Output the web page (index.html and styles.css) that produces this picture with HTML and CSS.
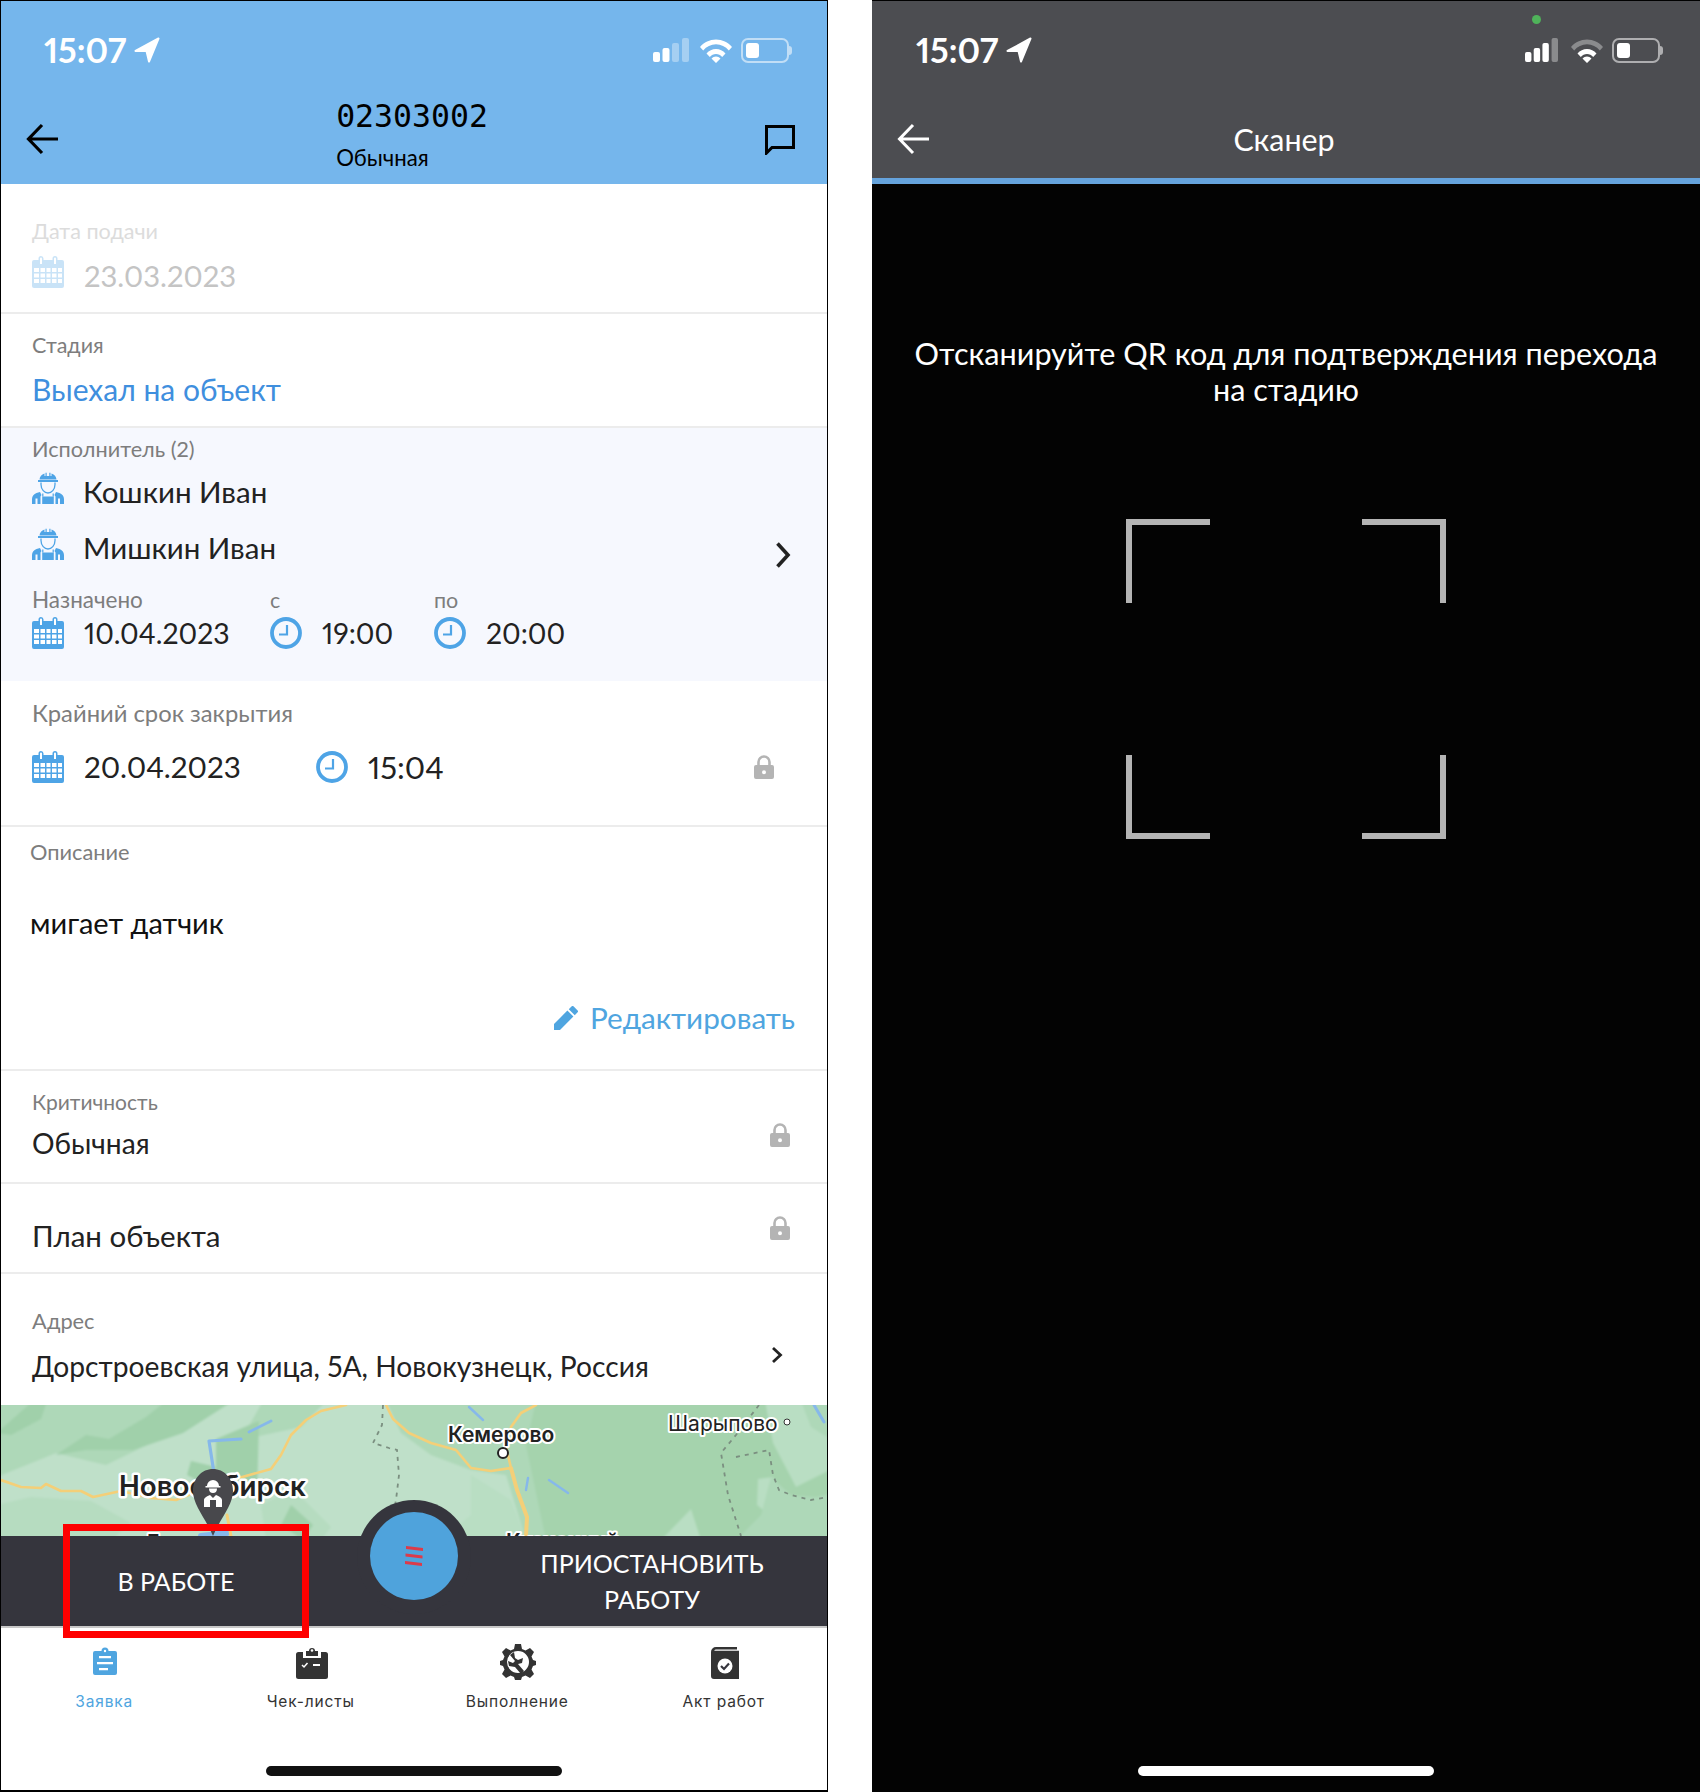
FILE: index.html
```html
<!DOCTYPE html>
<html lang="ru">
<head>
<meta charset="utf-8">
<title>Заявка и сканер</title>
<link rel="stylesheet" href="styles.css">
</head>
<body>
<svg class="defs" width="0" height="0" aria-hidden="true">
  <defs>
    <symbol id="cal" viewBox="0 0 32 32">
      <path fill="currentColor" d="M2 4h4.500V2.500a2.500 2.500 0 0 1 5 0V4h9V2.500a2.500 2.500 0 0 1 5 0V4H30a2 2 0 0 1 2 2v24a2 2 0 0 1-2 2H2a2 2 0 0 1-2-2V6a2 2 0 0 1 2-2z"/>
      <path fill="#fff" d="M8 2.500a1 1 0 0 1 2 0V8H8zM22 2.500a1 1 0 0 1 2 0V8h-2z"/>
      <path fill="#fff" d="M2 12h5v4H2zM8.500 12h4.500v4H8.500zM14.500 12h4v4h-4zM20 12h4.500v4H20zM26 12h4v4h-4zM2 17.500h5v4H2zM8.500 17.500h4.500v4H8.500zM14.500 17.500h4v4h-4zM20 17.500h4.500v4H20zM26 17.500h4v4h-4zM2 23h5v4H2zM8.500 23h4.500v4H8.500zM14.500 23h4v4h-4zM20 23h4.500v4H20zM26 23h4v4h-4z"/>
    </symbol>
    <symbol id="clock" viewBox="0 0 32 32">
      <circle cx="16" cy="16" r="14" fill="none" stroke="currentColor" stroke-width="3.800"/>
      <path fill="none" stroke="currentColor" stroke-width="2.200" d="M17 8v9.500H9"/>
    </symbol>
    <symbol id="worker" viewBox="0 0 32 32">
      <path fill="currentColor" d="M6 8h20v2H6zM7.500 7.500C7.800 4.500 9.500 2.500 12.500 1.500V4h1V.8h1.200V4h2.600V.8h1.200V4h1V1.500c3 1 4.700 3 5 6z"/>
      <path fill="none" stroke="currentColor" stroke-width="1.300" d="M9 10.500v2c0 5 3.500 8.500 7 8.500s7-3.500 7-8.500v-2"/>
      <path fill="currentColor" d="M0 32v-5c0-3 2-5 4.500-6L8 20l1.500 3-1 1.500V32H5.500v-5.500h-2V32zM32 32v-5c0-3-2-5-4.500-6L24 20l-1.500 3 1 1.500V32h2.500v-5.500h2V32z"/>
      <path fill="currentColor" d="M10.200 24.500h11.600V32H10.200z"/>
      <path fill="none" stroke="currentColor" stroke-width="1.200" d="M10.800 21.500v3M21.200 21.500v3"/>
    </symbol>
    <symbol id="lock" viewBox="0 0 20 24">
      <path fill="none" stroke="currentColor" stroke-width="2.600" d="M4.500 11V7a5.500 5.500 0 0 1 11 0v4"/>
      <path fill="currentColor" fill-rule="evenodd" d="M2 10h16a2 2 0 0 1 2 2v10a2 2 0 0 1-2 2H2a2 2 0 0 1-2-2V12a2 2 0 0 1 2-2zm8 5.200a2 2 0 1 0 0 4 2 2 0 0 0 0-4z"/>
    </symbol>
    <symbol id="nav" viewBox="0 0 26 26">
      <path fill="currentColor" stroke="currentColor" stroke-width="2" stroke-linejoin="round" d="M1.500 14 24.500 1.500 15 24.500 12.500 14z"/>
    </symbol>
    <symbol id="wifi" viewBox="0 0 32 24">
      <path fill="currentColor" class="wifi-top" d="M0 8.500C4 3.800 9.700 1 16 1s12 2.800 16 7.500l-3.200 3.400C25.500 8.100 21 5.800 16 5.800S6.500 8.100 3.200 11.900z"/>
      <path fill="currentColor" d="M6.500 15C9 12.200 12.300 10.500 16 10.500s7 1.700 9.500 4.500l-3.300 3.400c-1.600-1.900-3.800-3-6.200-3s-4.600 1.100-6.200 3zM11.500 20c1.200-1.200 2.800-2 4.500-2s3.300.8 4.500 2L16 24.500z"/>
    </symbol>
  </defs>
</svg>

<main class="page">
  <section class="phone">
    <header class="app-header">
      <div class="status">
        <div class="status-left"><span class="clock-time">15:07</span><svg class="nav-arrow"><use href="#nav"/></svg></div>
        <div class="status-right">
          <svg class="signal" viewBox="0 0 36 24" preserveAspectRatio="none"><rect x="0" y="14" width="7" height="10" rx="2" fill="#fff"/><rect x="9.500" y="10" width="7" height="14" rx="2" fill="#fff"/><rect x="19" y="5" width="7" height="19" rx="2" fill="#fff" opacity=".35"/><rect x="29" y="0" width="7" height="24" rx="2" fill="#fff" opacity=".35"/></svg>
          <svg class="wifi"><use href="#wifi"/></svg>
          <div class="battery light"><span class="battery-fill"></span></div>
        </div>
      </div>
      <div class="nav">
        <svg class="back" viewBox="0 0 32 32"><path fill="none" stroke="currentColor" stroke-width="3.200" d="M32 16H3M16 2 2.500 16 16 30"/></svg>
        <div class="nav-title">
          <div class="order-no">02303002</div>
          <div class="order-type">Обычная</div>
        </div>
        <svg class="chat" viewBox="0 0 30 30"><path fill="none" stroke="currentColor" stroke-width="3" d="M1.500 1.500h27v21H7L1.500 28z"/></svg>
      </div>
    </header>

    <div class="row row-filed">
      <div class="label label-off">Дата подачи</div>
      <div class="val-row off">
        <svg class="ic cal"><use href="#cal"/></svg>
        <span class="val val-low">23.03.2023</span>
      </div>
    </div>

    <div class="row row-stage">
      <div class="label">Стадия</div>
      <div class="stage">Выехал на объект</div>
    </div>

    <div class="exec">
      <div class="label label-exec">Исполнитель (2)</div>
      <div class="people">
        <div class="people-list">
          <div class="person"><svg class="ic worker"><use href="#worker"/></svg><span class="val">Кошкин Иван</span></div>
          <div class="person"><svg class="ic worker"><use href="#worker"/></svg><span class="val">Мишкин Иван</span></div>
        </div>
        <svg class="chev chev-big" viewBox="0 0 16 28"><path fill="none" stroke="currentColor" stroke-width="3.600" d="M2.500 2.500 13 14 2.500 25.500"/></svg>
      </div>
      <div class="assign">
        <div>
          <div class="label label-assign">Назначено</div>
          <div class="val-row"><svg class="ic cal"><use href="#cal"/></svg><span class="val">10.04.2023</span></div>
        </div>
        <div>
          <div class="label">с</div>
          <div class="val-row tight"><svg class="ic clock"><use href="#clock"/></svg><span class="val">19:00</span></div>
        </div>
        <div>
          <div class="label">по</div>
          <div class="val-row"><svg class="ic clock"><use href="#clock"/></svg><span class="val">20:00</span></div>
        </div>
      </div>
    </div>

    <div class="row row-deadline">
      <div class="label label-deadline">Крайний срок закрытия</div>
      <div class="deadline">
        <div class="val-row"><svg class="ic cal"><use href="#cal"/></svg><span class="val val-date">20.04.2023</span></div>
        <div class="val-row"><svg class="ic clock"><use href="#clock"/></svg><span class="val val-big">15:04</span></div>
        <svg class="lock lock-deadline"><use href="#lock"/></svg>
      </div>
    </div>

    <div class="row row-desc">
      <div class="label label-desc">Описание</div>
      <div class="desc">мигает датчик</div>
      <div class="edit">
        <svg class="pencil" viewBox="0 0 26 26"><path fill="currentColor" d="M0 26v-6.500L14.500 5l6.500 6.500L6.500 26zM16 3.500 19.200.4a1.300 1.300 0 0 1 1.900 0l4.500 4.500a1.300 1.300 0 0 1 0 1.900L22.500 10z"/></svg>
        <span>Редактировать</span>
      </div>
    </div>

    <div class="row row-crit">
      <div class="row-text">
        <div class="label label-crit">Критичность</div>
        <div class="val val-crit">Обычная</div>
      </div>
      <svg class="lock lock-crit"><use href="#lock"/></svg>
    </div>

    <div class="row row-plan">
      <div class="val">План объекта</div>
      <svg class="lock lock-plan"><use href="#lock"/></svg>
    </div>

    <div class="row-addr">
      <div class="row-text">
        <div class="label label-desc">Адрес</div>
        <div class="val val-addr">Дорстроевская улица, 5А, Новокузнецк, Россия</div>
      </div>
      <svg class="chev chev-small" viewBox="0 0 12 18"><path fill="none" stroke="currentColor" stroke-width="2.800" d="M2 2l7.500 7L2 16"/></svg>
    </div>

    <div class="map">
      <svg class="map-svg" viewBox="0 0 827 131">
        <g class="map-shapes">
          <rect x="-4" y="-4" width="835" height="139" fill="#a5d3ad"/>
          <path fill="#aed8b8" d="M-4-4H535L525 40 545 135H-4z"/>
          <path fill="#bfe0c9" d="M-4 72 55 48 105 60 150 38 205-4H262L240 35 300 22 325-4H385L400 28 430 50 470 65 505 70 525 135H-4z"/>
          <path fill="#a0d0aa" d="M-4 28 32-4H46L40 14 10 30zM55 50 85 30 108 34 145 12 165-4H232L182 28 132 45 85 45zM215 34 258 16 256 90 215 72zM190 56 215 62 205 80 186 70z"/>
          <path fill="#b6dcc0" d="M-4 100 30 92 90 96 130 118 110 135H-4zM260 100 292 84 330 122 320 135H265z"/>
          <path fill="#a0d0aa" d="M290 100 312 120 302 135 280 120z"/>
          <path fill="#b9dec3" d="M764-4H831V64L795 82 772 38zM757 74 772 72 782 96 770 112 756 100zM660 135 690 104 700 135zM470 70 510 95 525 135H440L470 110z"/>
          <path fill="#aed8b8" d="M800-4H831V35L810 22zM770 72 790 90 815 92 831 88V135H735L760 110z"/>
        </g>
        <g fill="none" stroke="#86b8ea" stroke-linecap="round" stroke-linejoin="round">
          <path stroke-width="3.200" d="M240 34 208 36 213 68"/>
          <path stroke-width="2.800" d="M248 27 270 16"/>
          <path stroke-width="2.400" d="M527 73 525 85M548 75 567 88M468 2 482 15"/>
          <path stroke-width="3" d="M813 0 823 17"/>
          <path stroke-width="6" d="M200 131 226 128"/>
        </g>
        <g fill="none" stroke="#f4cf78" stroke-linecap="round" stroke-linejoin="round">
          <path stroke-width="2.600" d="M0 75 20 82 40 83 45 79 60 86 80 86 92 92 120 86 150 93 175 95 200 85 220 78 270 64 280 50 290 30 305 15 320 6 345 0"/>
          <path stroke-width="2.600" d="M385 0 392 14 408 28 430 38 455 45 470 63 490 66 510 63 505 42 510 22 520 8 535 0"/>
          <path stroke-width="4" d="M510 63 516 85 526 112 525 131"/>
          <path stroke-width="3" d="M226 110 230 131"/>
        </g>
        <g fill="none" stroke="#7b8f80" stroke-width="1.800" stroke-dasharray="4 5">
          <path d="M382 0 381 20 372 38 388 43 396 45 398 70 395 95 388 131"/>
          <path d="M758 0 735 30 720 48 727 90 740 131M735 52 768 45 772 70 778 85 790 90 810 95 827 92"/>
        </g>
        <g class="map-labels">
          <text class="city-big" x="118" y="91">Новосибирск</text>
          <text class="city-mid" x="447" y="37">Кемерово</text>
          <text class="city-reg" x="667" y="26">Шарыпово</text>
          <text class="city-mid" x="505" y="144">Кузнецкий</text>
          <text class="city-mid" x="146" y="145">Бердск</text>
        </g>
        <circle cx="502" cy="48" r="5" fill="#fff" stroke="#222" stroke-width="2"/>
        <circle cx="786" cy="17" r="3" fill="#fff" stroke="#333" stroke-width="1"/>
        <path fill="#48484c" d="M212 64c11 0 20 9 20 22 0 14-12 26-20 45-8-19-20-31-20-45 0-13 9-22 20-22z"/>
        <path fill="#fff" d="M206 81a6 6 0 0 1 12 0h1.500v1.500h-15V81zM208 83.500h8c0 3-1.500 4.500-4 4.500s-4-1.500-4-4.500zM203 102v-7c0-2 3-4 6-5l3 3 3-3c3 1 6 3 6 5v7z"/>
        <path fill="#48484c" d="M209 95h6v7h-6z"/>
      </svg>
    </div>

    <div class="action-bar">
      <div class="action action-left">В РАБОТЕ</div>
      <div class="action action-right">ПРИОСТАНОВИТЬ<br>РАБОТУ</div>
      <div class="fab-ring">
        <div class="fab">
          <svg class="fab-bars" viewBox="0 0 18 20"><path fill="#dc3b4a" d="M1 0 18 2v3L1 3zM.500 7.500 17.500 9.500v3L.500 10.500zM0 15l17 2v3L0 18z"/></svg>
        </div>
      </div>
      <div class="mark"></div>
    </div>

    <nav class="tabs">
      <div class="tab tab-on">
        <svg class="tab-ic" viewBox="0 0 36 36"><path fill="currentColor" d="M8 7h6.500a3.500 3.500 0 0 1 7 0H28a2 2 0 0 1 2 2v20a2 2 0 0 1-2 2H8a2 2 0 0 1-2-2V9a2 2 0 0 1 2-2z"/><path fill="#fff" d="M12 12h12v2.200H12zM10 18h16v2.200H10zM12 24h9v2.200h-9z"/><circle cx="18" cy="7" r="1.200" fill="#fff"/></svg>
        <span>Заявка</span>
      </div>
      <div class="tab">
        <svg class="tab-ic" viewBox="0 0 36 36"><path fill="currentColor" d="M4.500 8H9v6h18V8h4.500A2.500 2.500 0 0 1 34 10.500v22a2.500 2.500 0 0 1-2.500 2.500h-27A2.500 2.500 0 0 1 2 32.500v-22A2.500 2.500 0 0 1 4.500 8z"/><path fill="currentColor" d="M12 12V7h3a3 3 0 0 1 6 0h3v5z"/><circle cx="18" cy="6.500" r="1.300" fill="#fff"/><path fill="none" stroke="#fff" stroke-width="1.500" d="M8 21l2 2 3.500-4"/><path fill="#fff" d="M19 20h7v2h-7z"/></svg>
        <span>Чек-листы</span>
      </div>
      <div class="tab">
        <svg class="tab-ic" viewBox="0 0 36 36"><path fill="currentColor" fill-rule="evenodd" d="M15 0h6l1 5 3.500 1.500L30 4l4 4-2.500 4.500L33 16l3 1v4l-3 1-1.500 3.500L34 30l-4 4-4.500-2.500L22 33l-1 3h-6l-1-3-3.500-1.500L6 34l-4-4 2.500-4.500L3 22l-3-1v-4l3-1 1.500-3.500L2 8l4-4 4.500 2.500L14 5zM18 7a11 11 0 1 0 0 22 11 11 0 0 0 0-22z"/><path fill="currentColor" d="M10 11l4-3 1 6 3 2 5-2-1 5-4 1 6 7-3 3-6-7-6-1-1-5 5 2 2-2z"/></svg>
        <span>Выполнение</span>
      </div>
      <div class="tab">
        <svg class="tab-ic" viewBox="0 0 36 36"><path fill="currentColor" d="M9 3h21v2.500H9a2 2 0 0 0-1.800 1.200H32V35H7a3 3 0 0 1-3-3V8a5 5 0 0 1 5-5z"/><circle cx="18" cy="22" r="7.500" fill="#fff"/><path fill="none" stroke="#35353d" stroke-width="2.200" d="M14 22l3 3 5-5.500"/></svg>
        <span>Акт работ</span>
      </div>
    </nav>
    <div class="home-bar dark"></div>
  </section>

  <section class="phone phone-scan">
    <header class="scan-header">
      <div class="status">
        <div class="status-left"><span class="clock-time">15:07</span><svg class="nav-arrow"><use href="#nav"/></svg></div>
        <span class="green-dot"></span>
        <div class="status-right">
          <svg class="signal" viewBox="0 0 36 24" preserveAspectRatio="none"><rect x="0" y="14" width="7" height="10" rx="2" fill="#fff"/><rect x="9.500" y="10" width="7" height="14" rx="2" fill="#fff"/><rect x="19" y="5" width="7" height="19" rx="2" fill="#fff"/><rect x="29" y="0" width="7" height="24" rx="2" fill="#fff" opacity=".35"/></svg>
          <svg class="wifi wifi-dim"><use href="#wifi"/></svg>
          <div class="battery"><span class="battery-fill"></span></div>
        </div>
      </div>
      <div class="scan-nav">
        <svg class="back" viewBox="0 0 32 32"><path fill="none" stroke="currentColor" stroke-width="3" d="M32 16H3M16 2 2.500 16 16 30"/></svg>
        <div class="scan-title">Сканер</div>
        <span class="scan-spacer"></span>
      </div>
    </header>
    <div class="scan-body">
      <p class="scan-text">Отсканируйте QR код для подтверждения перехода<br>на стадию</p>
      <div class="viewfinder">
        <span class="corner tl"></span>
        <span class="corner tr"></span>
        <span class="corner bl"></span>
        <span class="corner br"></span>
      </div>
    </div>
    <div class="home-bar light-bar"></div>
  </section>
</main>
</body>
</html>
```

FILE: styles.css
```css
* { box-sizing: border-box; }
html, body { margin: 0; padding: 0; background: #fff; }
body { font-family: "Lato", "Noto Sans", sans-serif; color: #222; font-variant-numeric: proportional-nums; }
.defs { position: absolute; }
svg { display: block; flex: none; }

.page { display: flex; gap: 44px; width: 1700px; height: 1792px; }

.phone {
  width: 828px;
  height: 1792px;
  display: flex;
  flex-direction: column;
  background: #fff;
  border: solid #000;
  border-width: 1px 1px 2px 1px;
  position: relative;
  overflow: hidden;
}

.app-header { height: 183px; background: #75b6ec; color: #000; display: flex; flex-direction: column; flex: none; }

.status { display: flex; justify-content: space-between; align-items: center; height: 40px; margin-top: 29px; padding: 0 31px 0 43px; color: #fff; }
.status-left { display: flex; align-items: center; gap: 8px; }
.clock-time { font-size: 34px; font-weight: 700; line-height: 40px; }
.nav-arrow { width: 26px; height: 26px; }
.status-right { display: flex; align-items: center; gap: 11px; }
.status-right .wifi { margin-right: -2px; }
.signal { width: 36px; height: 24px; }
.wifi { width: 32px; height: 25px; }
.wifi-top { opacity: var(--wifi-top, 1); }
.wifi-dim { --wifi-top: .35; }
.battery { width: 48px; height: 25px; border: 2px solid rgba(255,255,255,.55); border-radius: 7px; padding: 3px; position: relative; margin-right: 7px; }
.battery-fill { display: block; width: 13px; height: 100%; background: #fff; border-radius: 3px; }
.battery::after { content: ""; position: absolute; left: 46px; top: 6px; width: 3px; height: 9px; background: rgba(255,255,255,.55); border-radius: 0 3px 3px 0; }

.nav { display: grid; grid-template-columns: 1fr auto 1fr; align-items: center; padding: 0 32px 0 25px; height: 85px; margin-top: 26px; }
.back { width: 32px; height: 32px; }
.chat { width: 30px; height: 30px; justify-self: end; margin-top: 2px; }
.nav-title { margin-top: -10px; margin-left: 3px; }
.order-no { font-family: "DejaVu Sans Mono", monospace; font-size: 31.500px; line-height: 40px; letter-spacing: 0; }
.order-type { font-size: 22.200px; line-height: 26px; margin-top: 9px; }

.row { padding: 0 30px 0 31px; border-bottom: 2px solid #ececec; flex: none; }
.row-filed { height: 130px; padding-top: 35px; }
.row-stage { height: 114px; padding-top: 19px; }
.row-deadline { height: 146px; padding-top: 20px; }
.row-desc { height: 244px; padding: 13px 28px 0 29px; }
.row-crit { height: 113px; padding-top: 19px; display: flex; justify-content: space-between; }
.row-plan { height: 90px; padding-top: 35px; display: flex; justify-content: space-between; }
.row-addr { height: 131px; padding: 35px 30px 0 31px; display: flex; justify-content: space-between; flex: none; }

.label { font-size: 21.500px; line-height: 24px; color: #7d7d7d; }
.label-off { color: #dcdcdc; font-size: 21.600px; }
.label-exec { font-size: 21.700px; }
.label-desc { font-size: 21.800px; }
.label-crit { font-size: 21px; }
.label-assign { font-size: 22.500px; }
.label-deadline { font-size: 23.800px; }
.val { font-size: 29.500px; line-height: 34px; color: #222; }
.val-low { color: #c4c4c4; margin-top: 3px; font-size: 29.200px; }
.val-big { font-size: 31px; }
.val-date { font-size: 29.600px; }
.val-crit { font-size: 28.200px; }
.val-addr { font-size: 28.200px; }
.val-row { display: flex; align-items: center; gap: 20px; }
.val-row.tight { gap: 20px; }
.off { margin-top: 13px; align-items: flex-start; }
.ic { width: 32px; height: 32px; color: #4ea4e6; }
.off .ic { opacity: .3; }
.stage { font-size: 30px; line-height: 36px; color: #3f8fde; margin-top: 14px; }

.exec { height: 253px; background: #f6f8fe; padding: 9px 30px 0 31px; flex: none; }
.people { display: flex; justify-content: space-between; margin-top: 11px; }
.people-list { display: flex; flex-direction: column; gap: 24px; }
.person { display: flex; align-items: center; gap: 19px; height: 32px; }
.person .val { padding-top: 7px; }
.chev { color: #222; }
.chev-big { width: 16px; height: 28px; align-self: flex-end; margin: 0 6px -9px 0; }
.assign { display: grid; grid-template-columns: 238px 164px 1fr; margin-top: 28px; }
.assign .val-row { margin-top: 4px; }
.assign .val { font-size: 28.400px; }

.deadline { display: flex; align-items: center; margin-top: 22px; height: 40px; }
.deadline .val-row:first-child { width: 284px; }
.lock { width: 20px; height: 24px; color: #b4b4b4; }
.lock-deadline { margin-left: auto; margin-right: 23px; }
.lock-crit { margin-top: 33px; margin-right: 7px; }
.lock-plan { margin-top: -3px; margin-right: 7px; }

.desc { font-size: 29px; line-height: 34px; color: #111; margin-top: 42px; }
.edit { display: flex; justify-content: flex-end; align-items: center; gap: 12px; margin-top: 60px; color: #4fa5e0; font-size: 29.700px; line-height: 36px; padding-right: 4px; }
.pencil { width: 24px; height: 24px; }

.row-text .val-crit { margin-top: 12px; }
.row-text .val-addr { margin-top: 16px; }
.chev-small { width: 12px; height: 18px; margin: 37px 14px 0 0; }

.map { height: 131px; flex: none; overflow: hidden; }
.map-svg { width: 827px; height: 131px; }
.map-shapes { filter: blur(1px); }
.city-big, .city-mid, .city-reg { font-family: "Inter", "Roboto", sans-serif; paint-order: stroke; stroke: #fff; stroke-linejoin: round; fill: #222; }
.city-big { font-size: 27.800px; font-weight: 600; stroke-width: 5px; }
.city-mid { font-size: 21px; font-weight: 600; stroke-width: 4px; }
.city-reg { font-size: 21px; font-weight: 400; stroke-width: 4px; }

.action-bar { height: 92px; background: #35353d; border-bottom: 2px solid #c8c8c8; display: flex; position: relative; color: #fff; flex: none; }
.action { display: flex; align-items: center; justify-content: center; text-align: center; font-size: 25px; line-height: 36px; }
.action-left { width: 350px; }
.action-right { margin-left: 126px; width: 350px; }
.fab-ring { position: absolute; left: 356px; top: -36px; width: 114px; height: 114px; border-radius: 50%; background: #35353d; }
.fab { position: absolute; left: 13px; top: 12px; width: 88px; height: 88px; border-radius: 50%; background: #4fa3dc; display: flex; align-items: center; justify-content: center; }
.fab-bars { width: 18px; height: 20px; }
.mark { position: absolute; left: 62px; top: -12px; width: 246px; height: 114px; border: 7px solid #f00; }

.tabs { display: grid; grid-template-columns: repeat(4, 1fr); padding-top: 16px; flex: none; }
.tab { display: flex; flex-direction: column; align-items: center; gap: 12px; font-family: "Inter", sans-serif; font-size: 15.500px; line-height: 20px; letter-spacing: .85px; color: #333; }
.tab-on { color: #4fa5e0; }
.tab-ic { width: 36px; height: 36px; margin-left: 2px; }

.home-bar { width: 296px; height: 10px; border-radius: 5px; position: absolute; left: 265px; top: 1765px; }
.dark { background: #111; }
.light-bar { background: #fff; left: 266px; }

.phone-scan { background: #030303; border: none; border-top: 1px solid #000; width: 828px; }
.scan-header { height: 183px; background: #4c4d51; border-bottom: 6px solid #65a3dc; color: #fff; flex: none; position: relative; }
.scan-header .status { padding: 0 33px 0 44px; }
.scan-header .signal { width: 33px; margin-right: 2px; }
.green-dot { position: absolute; left: 660px; top: 14px; width: 9px; height: 9px; border-radius: 50%; background: #4fb35a; }
.scan-nav { display: grid; grid-template-columns: 1fr auto 1fr; align-items: center; padding: 0 29px 0 25px; height: 85px; margin-top: 26px; }
.scan-title { font-size: 30.400px; line-height: 36px; }
.scan-body { flex: 1; display: flex; flex-direction: column; align-items: center; }
.scan-text { margin: 152px 0 0; color: #fff; font-size: 30.600px; line-height: 36px; text-align: center; }
.viewfinder { width: 320px; height: 320px; margin-top: 111px; position: relative; }
.corner { position: absolute; width: 84px; height: 84px; border: 0 solid #b4b4b4; }
.tl { left: 0; top: 0; border-width: 6px 0 0 6px; }
.tr { right: 0; top: 0; border-width: 6px 6px 0 0; }
.bl { left: 0; bottom: 0; border-width: 0 0 6px 6px; }
.br { right: 0; bottom: 0; border-width: 0 6px 6px 0; }
```
